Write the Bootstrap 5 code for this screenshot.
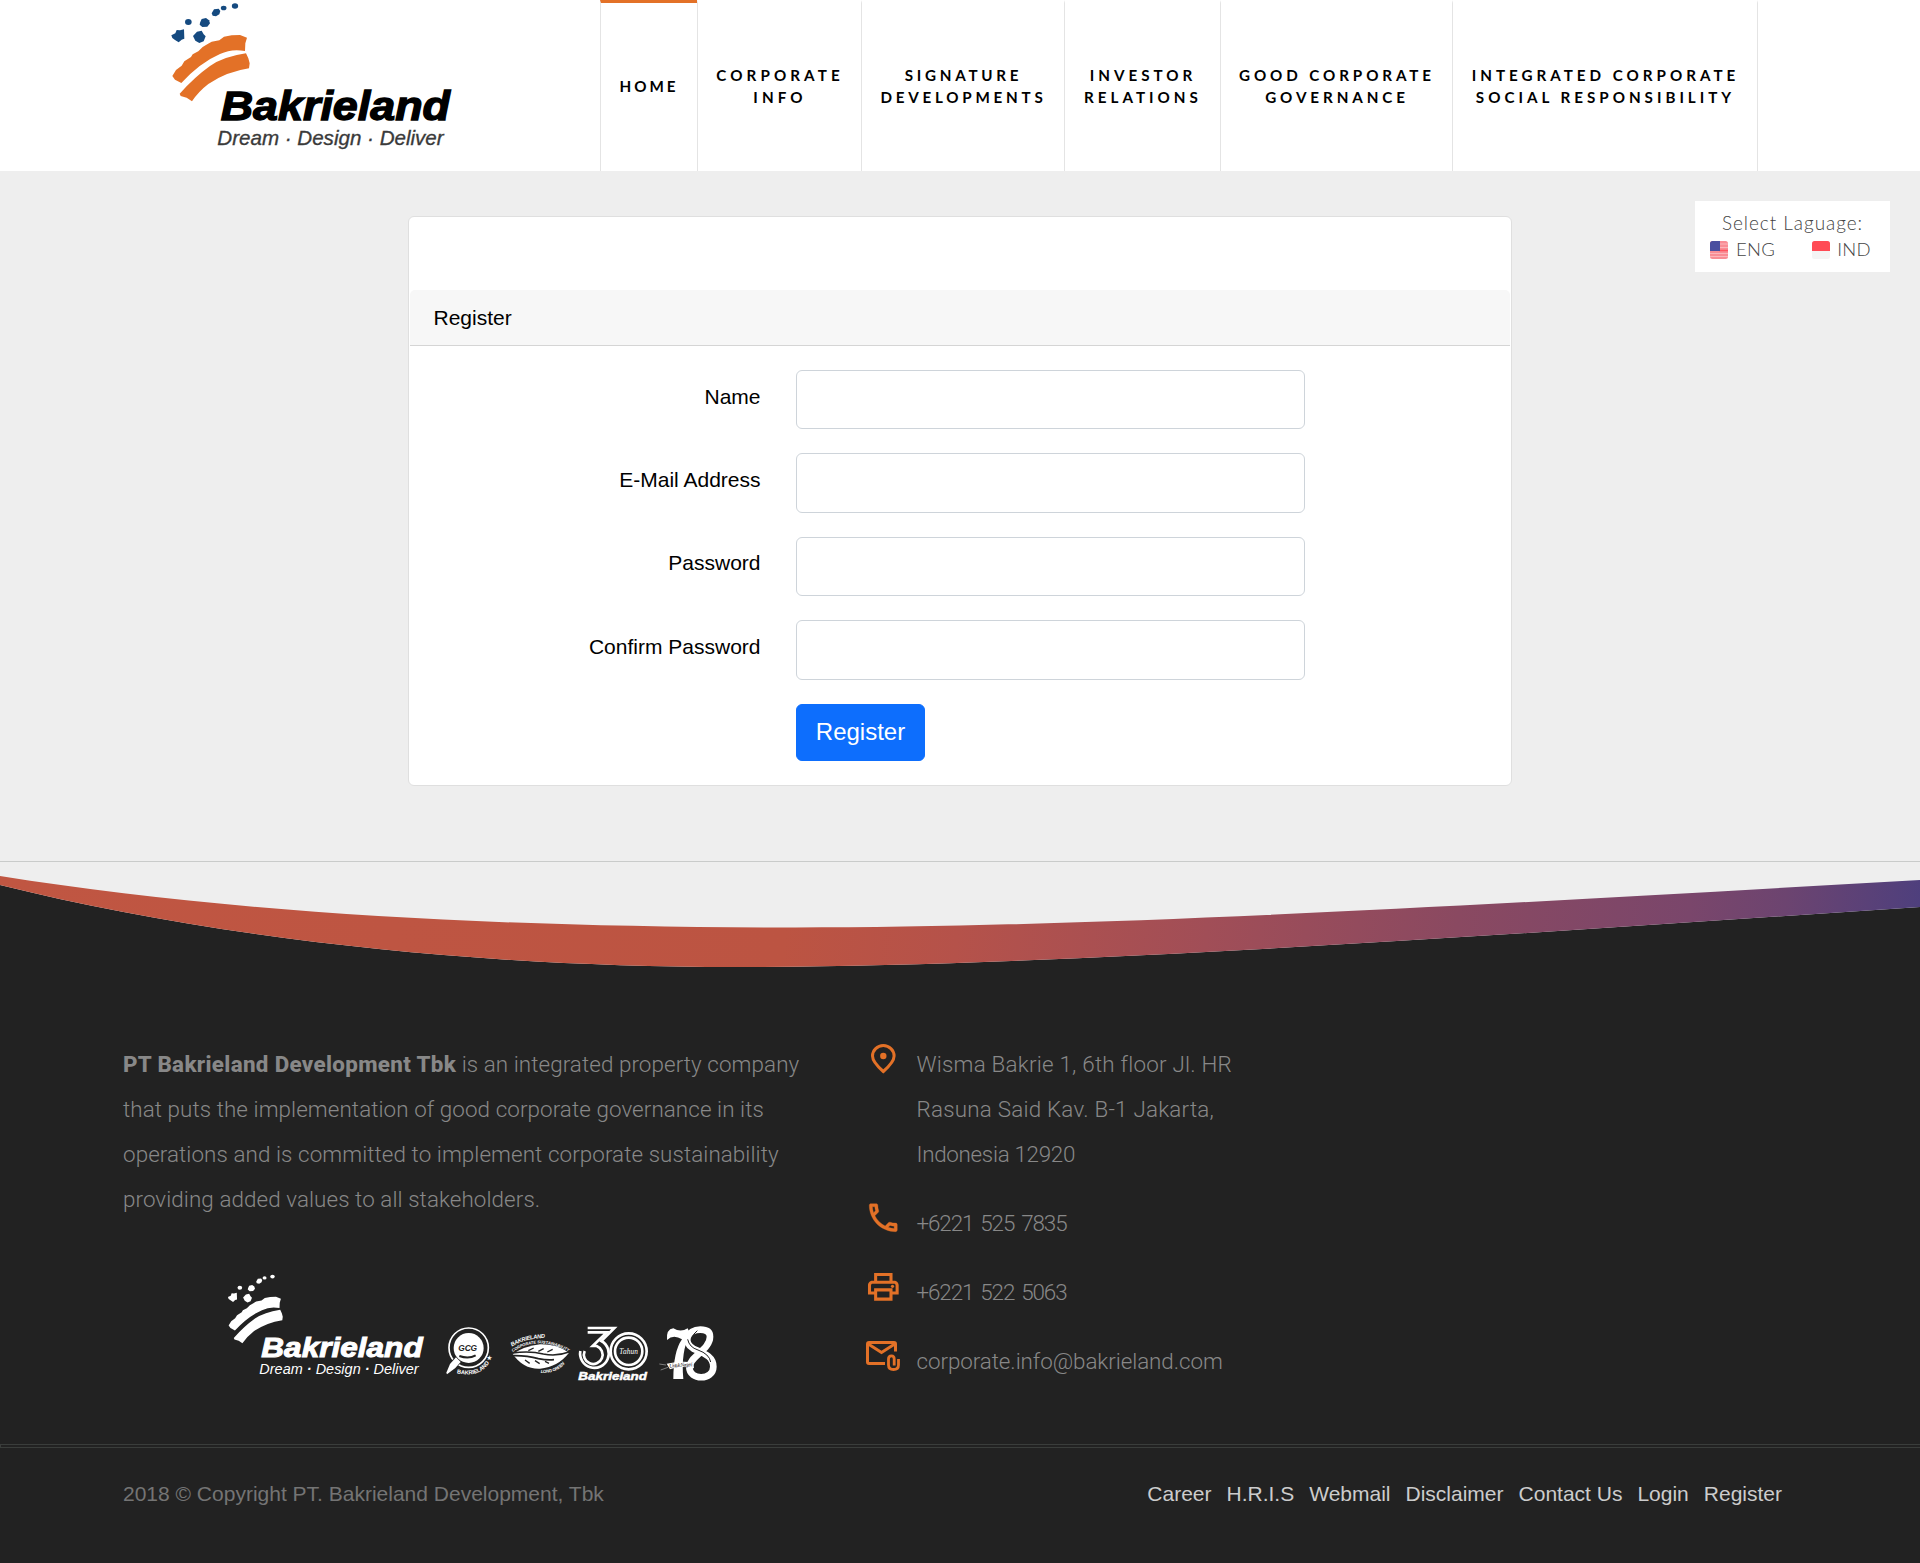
<!DOCTYPE html>
<html lang="en">
<head>
<meta charset="utf-8">
<meta name="viewport" content="width=device-width, initial-scale=1">
<title>Bakrieland - Register</title>
<link href="https://cdn.jsdelivr.net/npm/bootstrap@5.3.0/dist/css/bootstrap.min.css" rel="stylesheet">
<style>
body{background:#eee;font-family:"Liberation Sans",Arial,sans-serif;font-size:21px;color:#000;overflow-x:hidden}
.site-head{height:171px;background:#fff}
.brand-box{width:600px;padding-left:140px}
.menu-cell{border-left:1px solid #e4e4e4;border-top:3px solid transparent;background-clip:padding-box;height:171px;padding:0 0 3px 1px;color:#000;font:700 15.2px/22px Lato,sans-serif;white-space:nowrap;text-decoration:none}
.menu-cell.active{border-top-color:#e37127}
.menu-cell:last-child{border-right:1px solid #e4e4e4}
.cell-home{width:97px;padding-left:0;letter-spacing:2.95px}
.cell-info{width:164px;letter-spacing:4.1px}
.cell-sign{width:203px;letter-spacing:3.75px}
.cell-inv{width:156px;letter-spacing:4px}
.cell-gcg{width:232px;letter-spacing:3.9px}
.cell-csr{width:306px;letter-spacing:3.98px}
.ln{display:inline-block;white-space:nowrap}
.lang-box{position:absolute;top:201px;left:1695px;width:195px;height:71px;background:#fff;color:#444;font:300 19px/27px Lato,sans-serif;padding-top:8px}
.lang-title{letter-spacing:.95px}
.lang-row{padding-left:15px;font-size:18.5px}
.lang-code{margin-left:8px;letter-spacing:.3px}
.flag-next{margin-left:37px}
.flag-next + .lang-code{margin-left:7px}
.main-area{height:691px;padding-top:45px;border-bottom:1px solid #c9cbca}
.reg-card{width:1104px;height:570px;border-color:#dfdfdf;border-radius:6px;padding:73px 1px 0}
.reg-card .card-header{height:56px;padding:12px 23.5px;line-height:31px;background:#f7f7f7;border-radius:5px 5px 0 0;border-bottom:1px solid #d5d5d5}
.reg-card .card-body{padding:24px 0 0}
.field-row{height:59.4px;margin-bottom:24px}
.field-row label{width:350.5px;margin-right:35.5px;padding-top:10.6px;line-height:32px}
.field-row .form-control{width:509px;height:59.4px;border-color:#ced4da;border-radius:6px}
.reg-btn{margin:.5px 0 0 386px;width:129px;height:57px;font-size:24px;line-height:53px;padding:0 0 2px;border-radius:6px;background:#0d6efd}
.wave-art{height:108px}
.foot-area{background:#222;color:#888;height:593px}
.foot-main{height:474px;padding:72px 0 0 123px}
.about-col{width:739px;font:300 22.4px/45px Roboto,sans-serif;letter-spacing:.08px}
.about-col b{font-weight:800;letter-spacing:.32px}
.contact-col{font:300 22.4px/45px Roboto,sans-serif;letter-spacing:.22px}
.contact-col .tight{letter-spacing:-.3px}
.contact-col .digits{letter-spacing:-1.1px;word-spacing:2.6px}
.contact-col .mail-line{letter-spacing:-.07px}
.contact-row{gap:14.500px;margin-bottom:24px}
.badge-strip{margin:38px 0 0 87px}
.double-rule{height:4px;border:1px solid #3a3d3b;border-right:0}
.copy-bar{padding:31px 138px 0 123px;line-height:30px;color:#747474}
.copy-bar nav{gap:15px}
.copy-bar a{color:#ccc;text-decoration:none}
</style>
</head>
<body>
<svg width="0" height="0" class="position-absolute">
  <defs>
    <g id="swoosh">
      <path d="M97 228L108 210L125 197L133 184L153 171L158 163L175 154L188 141L203 132L215 125L238 121L252 110L275 106L300 105L321 113L316 130L315 153Q275 145 240 162Q180 188 124 249L105 239Z"/>
      <path d="M119 281Q165 230 210 198Q250 170 318 160L325 175L329 190L327 205Q260 215 205 252Q175 275 156 304L140 293L122 288Z"/>
    </g>
    <g id="dots">
      <path d="M94 106L106 100L110 90L120 91L132 88L133 116L125 119L116 127L105 120L97 114Z"/>
      <path d="M159 108L171 95L185 92L191 103L197 109L191 124L178 129L166 122Z"/>
      <path d="M180 68L185 57L198 54L207 61L210 70L202 80L187 81L179 74Z"/>
      <path d="M215 40L222 28L236 26L241 33L238 43L228 49L218 47Z"/>
      <ellipse cx="145" cy="66" rx="10" ry="9"/>
      <ellipse cx="251" cy="24" rx="8.500" ry="7"/>
      <ellipse cx="285" cy="18" rx="9.500" ry="8"/>
    </g>
  </defs>
</svg>

<header class="site-head d-flex">
  <div class="brand-box">
    <svg width="340" height="171" viewBox="0 0 1020 513" class="d-block">
      <use href="#dots" fill="#154a80"/>
      <use href="#swoosh" fill="#e37127"/>
      <text x="242" y="360" font-family="Liberation Sans, sans-serif" font-weight="700" font-style="italic" font-size="120" stroke="#000" stroke-width="4" textLength="688" lengthAdjust="spacingAndGlyphs">Bakrieland</text>
      <text x="232" y="436" font-family="Liberation Sans, sans-serif" font-style="italic" font-size="62" fill="#3a3a3a" stroke="#3a3a3a" stroke-width="1" textLength="679" lengthAdjust="spacingAndGlyphs">Dream · Design · Deliver</text>
    </svg>
  </div>
  <nav class="d-flex text-center">
    <a href="#" class="menu-cell cell-home active d-flex flex-column justify-content-center align-items-center"><span class="ln">HOME</span></a>
    <a href="#" class="menu-cell cell-info d-flex flex-column justify-content-center align-items-center"><span class="ln">CORPORATE</span><span class="ln">INFO</span></a>
    <a href="#" class="menu-cell cell-sign d-flex flex-column justify-content-center align-items-center"><span class="ln">SIGNATURE</span><span class="ln">DEVELOPMENTS</span></a>
    <a href="#" class="menu-cell cell-inv d-flex flex-column justify-content-center align-items-center"><span class="ln">INVESTOR</span><span class="ln">RELATIONS</span></a>
    <a href="#" class="menu-cell cell-gcg d-flex flex-column justify-content-center align-items-center"><span class="ln">GOOD CORPORATE</span><span class="ln">GOVERNANCE</span></a>
    <a href="#" class="menu-cell cell-csr d-flex flex-column justify-content-center align-items-center"><span class="ln">INTEGRATED CORPORATE</span><span class="ln">SOCIAL RESPONSIBILITY</span></a>
  </nav>
</header>

<aside class="lang-box">
  <div class="text-center lang-title"><span class="ln">Select Laguage:</span></div>
  <div class="lang-row d-flex align-items-center">
    <svg width="18" height="18" viewBox="0 0 18 18"><rect width="18" height="18" rx="2.500" fill="#f98d95"/><path d="M9 3h9M9 6.500h9M0 12.500h18M0 15.500h18" stroke="#fbb5ba" stroke-width="1"/><path d="M9 9.500h9" stroke="#ff5560" stroke-width="1.500"/><path d="M0 10V2.500Q0 0 2.500 0H10V10Z" fill="#4a4f9f"/></svg>
    <span class="ln lang-code">ENG</span>
    <svg class="flag-next" width="18" height="18" viewBox="0 0 18 18"><rect width="18" height="18" rx="2.500" fill="#f4f4f4"/><path d="M0 10V2.500Q0 0 2.500 0H15.500Q18 0 18 2.500V10Z" fill="#ff4b55"/></svg>
    <span class="ln lang-code">IND</span>
  </div>
</aside>

<main class="main-area">
  <div class="card reg-card mx-auto">
    <div class="card-header">Register</div>
    <form class="card-body">
      <div class="field-row d-flex"><label for="name" class="text-end">Name</label><input id="name" type="text" class="form-control"></div>
      <div class="field-row d-flex"><label for="email" class="text-end">E-Mail Address</label><input id="email" type="email" class="form-control"></div>
      <div class="field-row d-flex"><label for="pass" class="text-end">Password</label><input id="pass" type="password" class="form-control"></div>
      <div class="field-row d-flex"><label for="pass2" class="text-end">Confirm Password</label><input id="pass2" type="password" class="form-control"></div>
      <button type="button" class="btn btn-primary reg-btn">Register</button>
    </form>
  </div>
</main>

<svg class="wave-art d-block w-100" viewBox="0 862 1920 108" preserveAspectRatio="none">
  <defs><linearGradient id="band" gradientUnits="userSpaceOnUse" x1="0" y1="900" x2="1900" y2="1100">
    <stop offset="0" stop-color="#c05642"/><stop offset=".41" stop-color="#bc5442"/><stop offset=".5" stop-color="#b5524a"/><stop offset=".63" stop-color="#a14e57"/><stop offset=".76" stop-color="#8a4961"/><stop offset=".88" stop-color="#7a466b"/><stop offset=".93" stop-color="#6c4470"/><stop offset="1" stop-color="#4e3f7d"/>
  </linearGradient></defs>
  <path d="M0 885C200 935 460 967 735 967C1050 967 1500 935 1920 907V971H0Z" fill="#222"/>
  <path d="M0 876C220 911 480 927.500 796 927.500C1100 927.500 1500 904 1920 880V907C1500 935 1050 967 735 967C460 967 200 935 0 885Z" fill="url(#band)"/>
</svg>

<footer class="foot-area">
  <div class="foot-main d-flex">
    <div class="about-col">
      <div><span class="ln"><b>PT Bakrieland Development Tbk</b></span> <span class="ln">is an integrated property company</span></div>
      <div><span class="ln">that puts the implementation of good corporate governance in its</span></div>
      <div><span class="ln">operations and is committed to implement corporate sustainability</span></div>
      <div><span class="ln">providing added values to all stakeholders.</span></div>
      <div class="badge-strip d-flex">
        <svg width="220" height="140" viewBox="0 0 660 420" fill="#fff">
          <g transform="translate(-12 37) scale(.7)"><use href="#dots"/><use href="#swoosh"/></g>
          <text x="154" y="292" font-family="Liberation Sans, sans-serif" font-weight="700" font-style="italic" font-size="82" stroke="#fff" stroke-width="3" textLength="484" lengthAdjust="spacingAndGlyphs">Bakrieland</text>
          <text x="148" y="342" font-family="Liberation Sans, sans-serif" font-style="italic" font-size="45" textLength="478" lengthAdjust="spacingAndGlyphs">Dream <tspan font-weight="700">·</tspan> Design <tspan font-weight="700">·</tspan> Deliver</text>
        </svg>
        <svg width="70" height="140" viewBox="660 0 210 420" fill="#fff">
          <circle cx="776" cy="263" r="59" fill="none" stroke="#fff" stroke-width="5"/>
          <circle cx="776" cy="264" r="45"/>
          <path d="M745 300L722 320" stroke="#222" stroke-width="24"/>
          <path d="M738 292L752 306L736 324L711 343L709 338L720 312Z"/>
          <path d="M748 288Q776 298 797 286" stroke="#222" stroke-width="6" fill="none"/>
          <text x="745" y="273" font-family="Liberation Sans, sans-serif" font-weight="700" font-style="italic" font-size="25" fill="#222" textLength="56">GCG</text>
          <path id="gcgArc" d="M740 340Q828 358 849 280" fill="none"/>
          <text font-family="Liberation Sans, sans-serif" font-weight="700" font-size="17"><textPath href="#gcgArc" textLength="130">BAKRIELAND ★</textPath></text>
        </svg>
        <svg width="73" height="140" viewBox="870 0 219 420" fill="#fff">
          <path d="M908 282Q945 258 990 253Q1040 252 1077 278Q1045 320 990 326Q940 328 908 282Z"/>
          <path d="M908 279Q960 272 1000 282Q1040 290 1077 276M908 287Q950 286 985 296Q1010 301 1032 299" stroke="#222" stroke-width="5" fill="none"/>
          <path d="M955 272l16-8M985 274l16-8M1012 276l16-8M945 300l14 10M975 302l14 9M1005 304l12 6" stroke="#222" stroke-width="4"/>
          <path id="leafA" d="M906 260Q940 236 1010 233" fill="none"/><path id="leafB" d="M908 276Q985 224 1078 276" fill="none"/><path id="leafC" d="M992 339Q1045 340 1068 306" fill="none"/>
          <g font-family="Liberation Sans, sans-serif" font-weight="700" font-style="italic">
            <text font-size="17"><textPath href="#leafA" textLength="104">BAKRIELAND</textPath></text>
            <text font-size="12"><textPath href="#leafB" textLength="178">CORPORATE SUSTAINABILITY</textPath></text>
            <text font-size="13"><textPath href="#leafC" textLength="80">LONG GREEN</textPath></text>
          </g>
        </svg>
        <svg width="84" height="140" viewBox="1089 0 252 420" fill="#fff">
          <g fill="none" stroke="#fff" stroke-width="8">
            <path d="M1133 204H1213L1174 243A43 43 0 1 1 1111 273"/>
            <path d="M1133 217H1190L1148 258H1160A28 28 0 1 1 1124 273"/>
            <circle cx="1256" cy="274" r="54"/><circle cx="1256" cy="274" r="41"/>
          </g>
          <text x="1228" y="281" font-family="Liberation Serif, serif" font-style="italic" font-size="22" textLength="56">Tahun</text>
          <text x="1105" y="361" font-family="Liberation Sans, sans-serif" font-weight="700" font-style="italic" font-size="34" stroke="#fff" stroke-width="1.500" textLength="206" lengthAdjust="spacingAndGlyphs">Bakrieland</text>
        </svg>
        <svg width="73" height="140" viewBox="1341 0 219 420" fill="#fff">
          <path d="M1371 240Q1368 208 1390 205Q1412 218 1433 205L1440 221Q1412 275 1420 357H1390Q1390 275 1416 238Q1390 222 1371 240Z"/>
          <path d="M1471 209C1430 209 1418 248 1450 266C1480 280 1510 288 1510 320C1510 362 1438 362 1438 322C1438 290 1500 270 1500 230C1500 214 1488 209 1471 209" fill="none" stroke="#fff" stroke-width="20"/>
          <path d="M1433 238Q1438 262 1464 270Q1498 282 1502 306M1462 212Q1448 222 1446 236" fill="none" stroke="#222" stroke-width="3"/>
          <path d="M1370 311Q1410 302 1450 307L1452 325Q1410 316 1380 328Z"/>
          <path d="M1348 312l20 3M1352 330l22-8" stroke="#aaa" stroke-width="2"/>
          <text x="1378" y="323" font-family="Liberation Serif, serif" font-style="italic" font-size="17" fill="#222" transform="rotate(-4 1378 323)" textLength="70">Untuk Negeri</text>
        </svg>
      </div>
    </div>
    <div class="contact-col">
      <div class="contact-row d-flex">
        <svg width="40" height="45" fill="none" stroke="#e37127" stroke-width="3"><path d="M21.300 29.500Q10.500 20 10.500 14A10.800 10.500 0 0 1 32.100 14Q32.100 20 21.300 29.500Z"/><circle cx="21.300" cy="14" r="3.200" fill="#e37127" stroke="none"/></svg>
        <div><div><span class="ln">Wisma Bakrie 1, 6th floor Jl. HR</span></div><div><span class="ln">Rasuna Said Kav. B-1 Jakarta,</span></div><div><span class="ln tight">Indonesia 12920</span></div></div>
      </div>
      <div class="contact-row d-flex">
        <svg width="40" height="45" fill="#e37127"><path stroke="#e37127" stroke-width=".2" transform="translate(2.600 -2) scale(1.555)" d="M6.540 5c.06.89.21 1.760.45 2.590l-1.200 1.200c-.41-1.200-.67-2.470-.76-3.790h1.510m9.860 12.020c.85.24 1.720.39 2.600.45v1.490c-1.320-.09-2.590-.35-3.800-.75l1.200-1.190M7.500 3H4c-.55 0-1 .45-1 1 0 9.390 7.610 17 17 17 .55 0 1-.45 1-1v-3.490c0-.55-.45-1-1-1-1.240 0-2.450-.2-3.570-.57-.1-.04-.21-.05-.31-.05-.26 0-.51.1-.71.29l-2.200 2.200c-2.830-1.450-5.150-3.760-6.590-6.590l2.200-2.200c.28-.28.36-.67.25-1.020C8.700 6.450 8.500 5.250 8.500 4c0-.55-.45-1-1-1z"/></svg>
        <span class="ln digits">+6221 525 7835</span>
      </div>
      <div class="contact-row d-flex">
        <svg width="40" height="45" fill="#e37127"><path transform="translate(2.900 -1.600) scale(1.535)" d="M19 8h-1V3H6v5H5c-1.660 0-3 1.340-3 3v6h4v4h12v-4h4v-6c0-1.660-1.340-3-3-3zM8 5h8v3H8V5zm8 12v2H8v-4h8v2zm2-2v-2H6v2H4v-4c0-.55.45-1 1-1h14c.55 0 1 .45 1 1v4h-2z"/><circle cx="30.500" cy="16.300" r="1.600"/></svg>
        <span class="ln digits">+6221 522 5063</span>
      </div>
      <div class="contact-row d-flex">
        <svg width="40" height="45" fill="none" stroke="#e37127" stroke-width="3"><path d="M23 24.500H7Q5.500 24.500 5.500 23V5Q5.500 3.500 7 3.500H32Q33.500 3.500 33.500 5V12.500M5.500 4.500L19.500 13.500L33.500 4.500"/><path d="M36.500 20V26Q36.500 30.500 31.500 30.500Q26.500 30.500 26.500 26V20Q26.500 16.800 29.500 16.800Q32.200 16.800 32.200 20V26.500" stroke-width="2.800"/></svg>
        <span class="ln mail-line">corporate.info@bakrieland.com</span>
      </div>
    </div>
  </div>
  <div class="double-rule"></div>
  <div class="copy-bar d-flex justify-content-between">
    <span class="ln">2018 © Copyright PT. Bakrieland Development, Tbk</span>
    <nav class="d-flex"><a href="#">Career</a><a href="#">H.R.I.S</a><a href="#">Webmail</a><a href="#">Disclaimer</a><a href="#">Contact Us</a><a href="#">Login</a><a href="#">Register</a></nav>
  </div>
</footer>
<script src="https://cdn.jsdelivr.net/npm/bootstrap@5.3.0/dist/js/bootstrap.bundle.min.js"></script>
</body>
</html>
